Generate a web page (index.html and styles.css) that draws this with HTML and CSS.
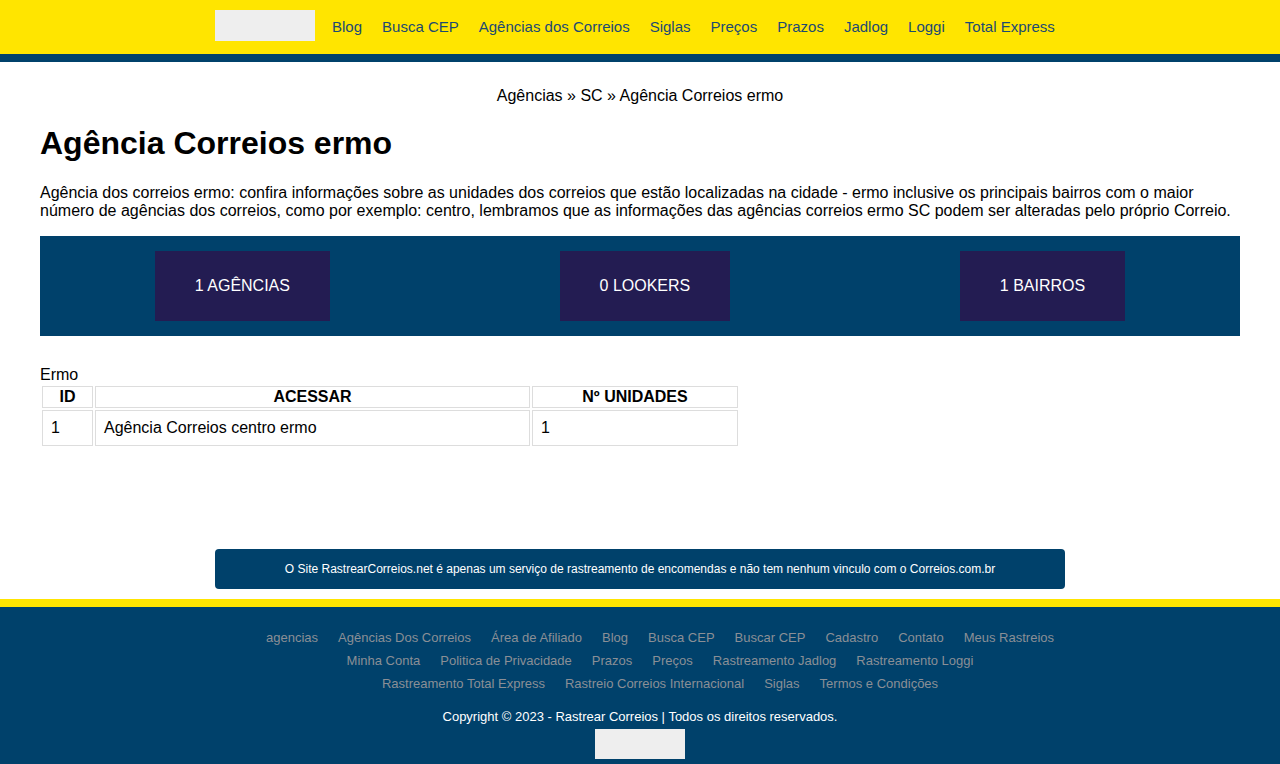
FILE: index.html
```html
<!DOCTYPE html>
<html lang="pt-BR">
<head>
<meta charset="utf-8">
<title>Agência Correios ermo</title>
<link rel="stylesheet" href="styles.css">
</head>
<body>
<header class="site-header">
  <div class="header-inner">
    <a class="logo" href="#"></a>
    <nav class="main-nav">
      <a href="#">Blog</a>
      <a href="#">Busca CEP</a>
      <a href="#">Agências dos Correios</a>
      <a href="#">Siglas</a>
      <a href="#">Preços</a>
      <a href="#">Prazos</a>
      <a href="#">Jadlog</a>
      <a href="#">Loggi</a>
      <a href="#">Total Express</a>
    </nav>
  </div>
</header>

<main class="content">
  <div class="breadcrumb"><a href="#">Agências</a> » <a href="#">SC</a> » <span>Agência Correios ermo</span></div>
  <h1 class="title">Agência Correios ermo</h1>
  <p class="intro">Agência dos correios ermo: confira informações sobre as unidades dos correios que estão localizadas na cidade - ermo inclusive os principais bairros com o maior número de agências dos correios, como por exemplo: centro, lembramos que as informações das agências correios ermo SC podem ser alteradas pelo próprio Correio.</p>

  <div class="stats">
    <div class="stat">1 AGÊNCIAS</div>
    <div class="stat">0 LOOKERS</div>
    <div class="stat">1 BAIRROS</div>
  </div>

  <table class="units">
    <caption>Ermo</caption>
    <thead>
      <tr><th class="c-id">ID</th><th class="c-link">ACESSAR</th><th class="c-num">Nº UNIDADES</th></tr>
    </thead>
    <tbody>
      <tr><td>1</td><td><a href="#">Agência Correios centro ermo</a></td><td>1</td></tr>
    </tbody>
  </table>
</main>

<div class="notice">O Site RastrearCorreios.net é apenas um serviço de rastreamento de encomendas e não tem nenhum vinculo com o Correios.com.br</div>

<footer class="site-footer">
  <div class="footer-inner">
    <ul class="footer-links">
      <li><a href="#">agencias</a></li>
      <li><a href="#">Agências Dos Correios</a></li>
      <li><a href="#">Área de Afiliado</a></li>
      <li><a href="#">Blog</a></li>
      <li><a href="#">Busca CEP</a></li>
      <li><a href="#">Buscar CEP</a></li>
      <li><a href="#">Cadastro</a></li>
      <li><a href="#">Contato</a></li>
      <li><a href="#">Meus Rastreios</a></li>
      <li><a href="#">Minha Conta</a></li>
      <li><a href="#">Politica de Privacidade</a></li>
      <li><a href="#">Prazos</a></li>
      <li><a href="#">Preços</a></li>
      <li><a href="#">Rastreamento Jadlog</a></li>
      <li><a href="#">Rastreamento Loggi</a></li>
      <li><a href="#">Rastreamento Total Express</a></li>
      <li><a href="#">Rastreio Correios Internacional</a></li>
      <li><a href="#">Siglas</a></li>
      <li><a href="#">Termos e Condições</a></li>
    </ul>
    <p class="copyright">Copyright © 2023 - Rastrear Correios | Todos os direitos reservados.</p>
    <div class="footer-logo"></div>
  </div>
</footer>
</body>
</html>
```

FILE: styles.css
```css
* { box-sizing: border-box; }

body {
  margin: 0;
  font-family: "Liberation Sans", Arial, sans-serif;
  font-size: 16px;
  line-height: 18px;
  color: #000;
  background: #fff;
}

a { color: inherit; text-decoration: none; }

.site-header {
  background: #ffe500;
  border-bottom: 8px solid #00416b;
}

.header-inner {
  width: 850px;
  margin: 0 auto;
  height: 54px;
  display: flex;
  align-items: center;
}

.logo {
  display: block;
  width: 100px;
  height: 31px;
  background: #eeeeee;
  align-self: flex-start;
  margin-top: 10px;
  margin-right: 7px;
}

.main-nav {
  display: flex;
}

.main-nav a {
  color: #1c4a72;
  font-size: 15px;
  padding: 0 10px;
}

.content {
  padding: 0 40px;
}

.breadcrumb {
  text-align: center;
  margin-top: 25px;
}

.title {
  font-size: 32px;
  line-height: 37px;
  margin: 20px 0 0;
  font-weight: bold;
}

.intro {
  margin: 22px 0 0;
}

.stats {
  margin-top: 16px;
  background: #00416b;
  padding: 15px 0;
  display: flex;
  justify-content: space-around;
}

.stat {
  background: #231c52;
  color: #fff;
  height: 70px;
  line-height: 70px;
  padding: 0 40px;
}

.units {
  margin-top: 30px;
  width: 700px;
  border-spacing: 2px;
}

.units caption {
  text-align: left;
}

.units th,
.units td {
  border: 1px solid #dddddd;
}

.units th {
  padding: 1px;
  font-weight: bold;
  text-align: center;
}

.units td {
  padding: 8px;
  text-align: left;
}

.c-id { width: 51px; }
.c-link { width: 435px; }
.c-num { width: 206px; }

.notice {
  width: 850px;
  margin: 101px auto 10px;
  background: #00416b;
  color: #fff;
  font-size: 12px;
  height: 40px;
  line-height: 40px;
  text-align: center;
  border-radius: 4px;
}

.site-footer {
  background: #00416b;
  border-top: 8px solid #ffe500;
  padding: 19px 0 5px;
}

.footer-inner {
  width: 850px;
  margin: 0 auto;
  text-align: center;
}

.footer-links {
  list-style: none;
  margin: 0;
  padding: 0 0 0 40px;
  font-size: 13px;
  line-height: 23px;
  display: flex;
  flex-wrap: wrap;
  justify-content: center;
}

.footer-links li {
  margin: 0 10px;
}

.footer-links a {
  color: #8a8f96;
}

.copyright {
  color: #fff;
  font-size: 13px;
  margin: 13px 0 0;
}

.footer-logo {
  width: 90px;
  height: 30px;
  background: #eeeeee;
  margin: 3px auto 0;
}
```
